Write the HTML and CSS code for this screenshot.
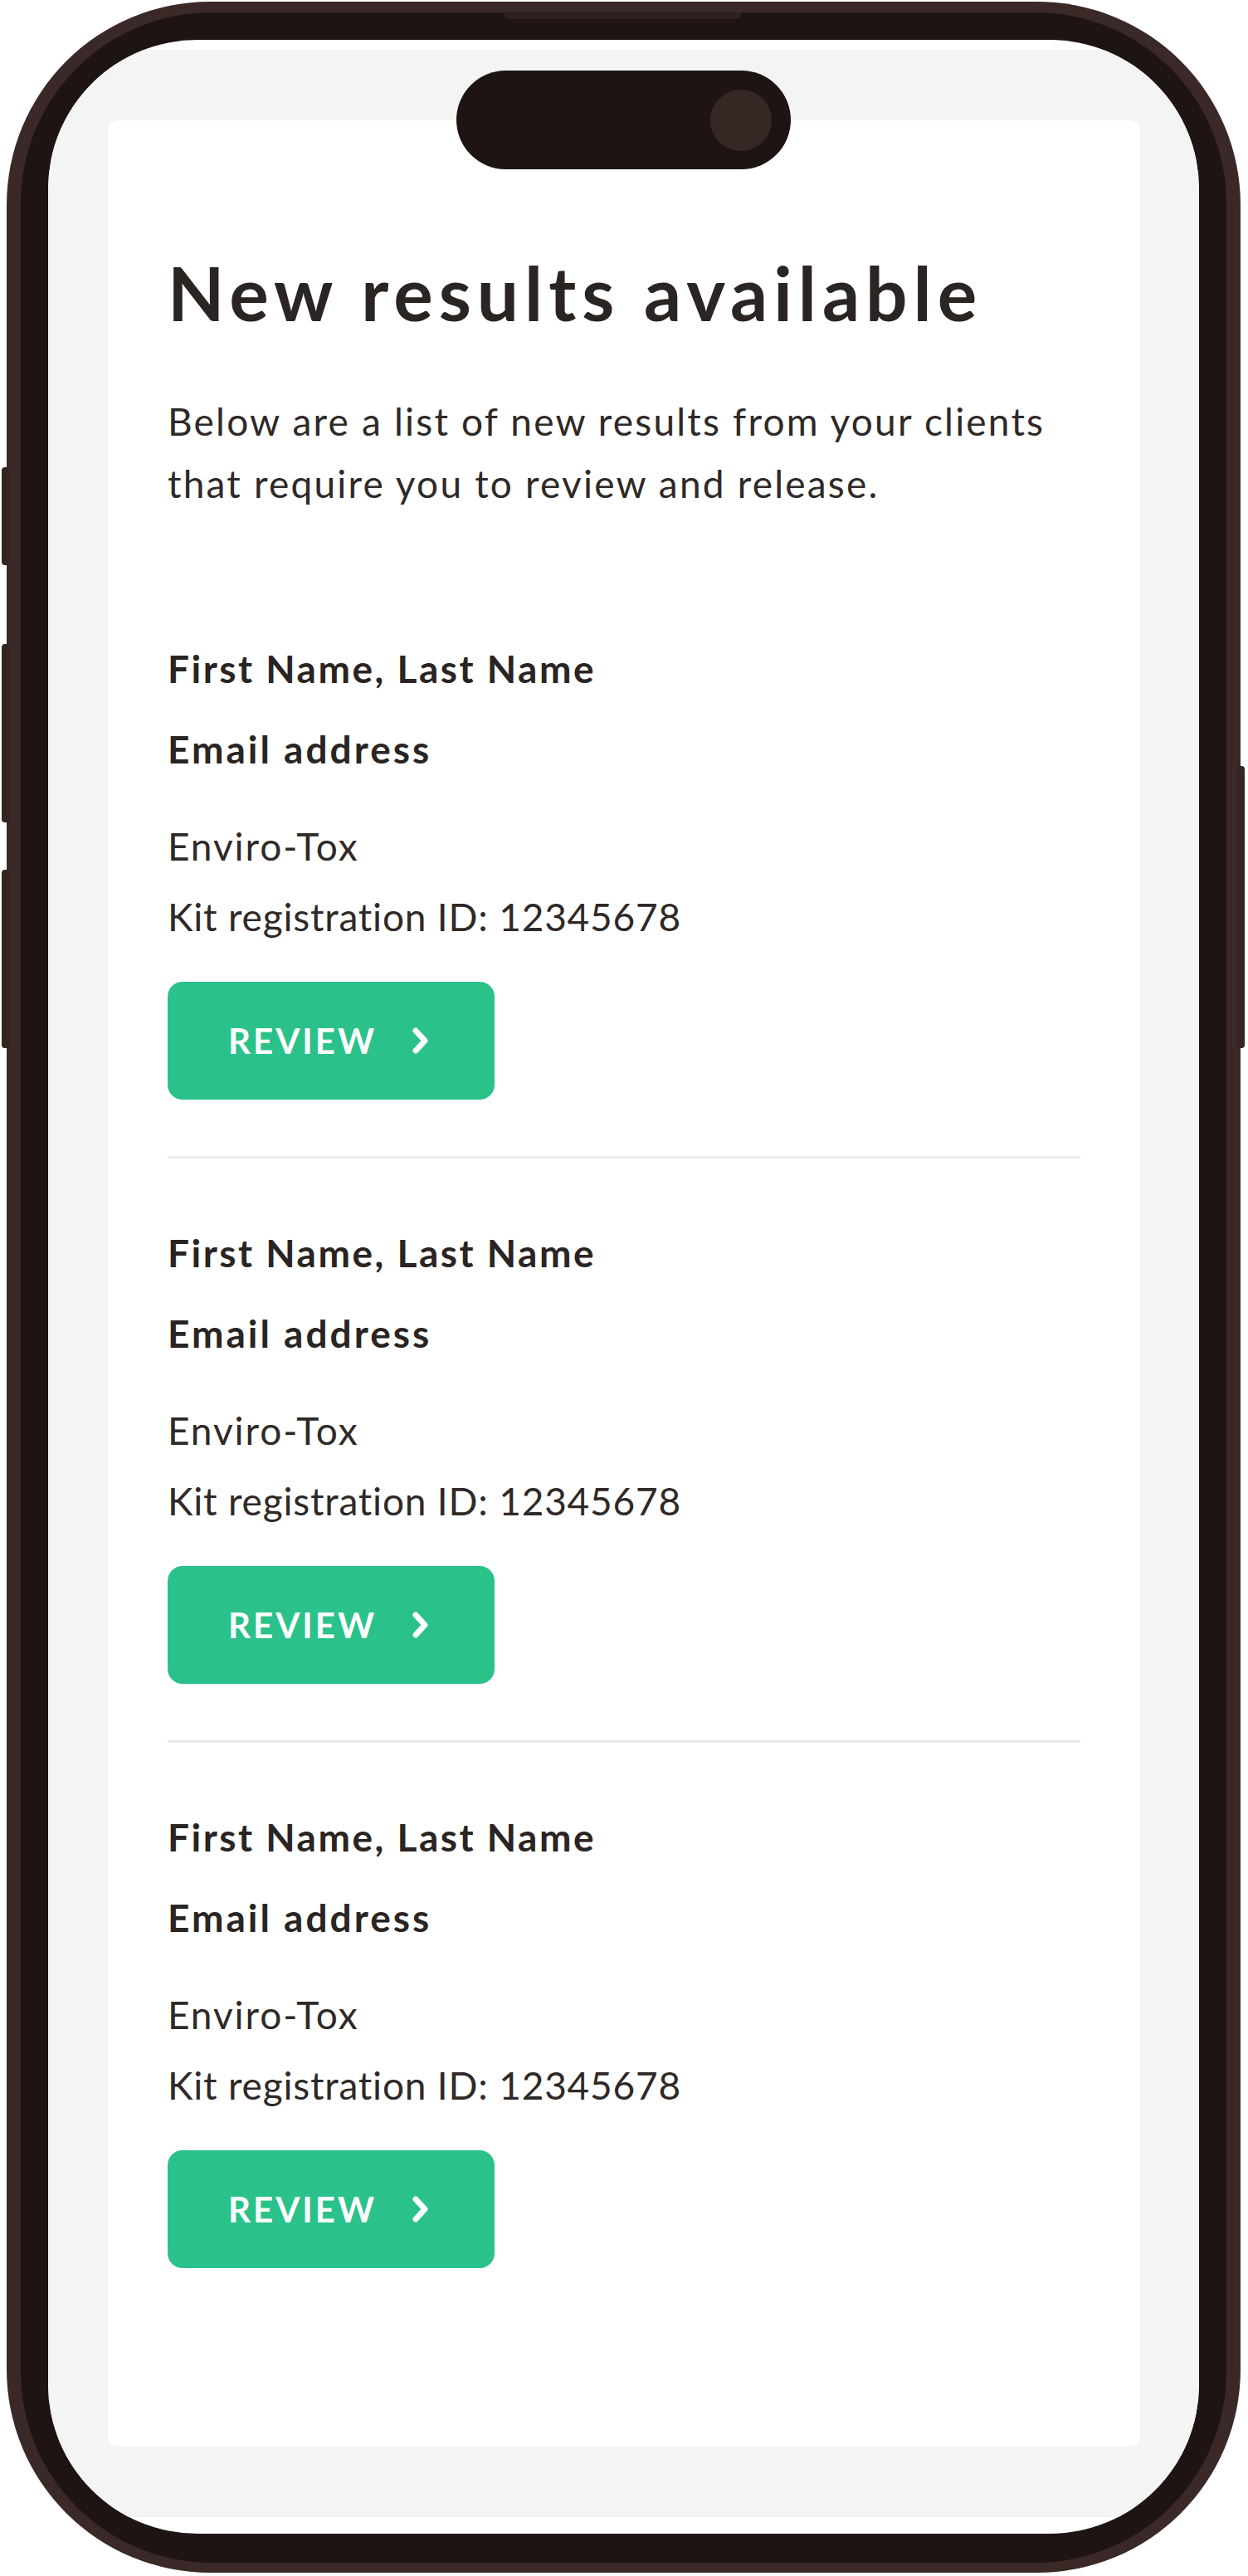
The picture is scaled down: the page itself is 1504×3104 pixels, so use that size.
FILE: index.html
```html
<!DOCTYPE html>
<html lang="en">
<head>
<meta charset="utf-8">
<title>New results available</title>
<link rel="stylesheet" href="styles.css">
</head>
<body>
<div class="phone">
  <span class="side-btn side-btn--l1"></span>
  <span class="side-btn side-btn--l2"></span>
  <span class="side-btn side-btn--l3"></span>
  <span class="side-btn side-btn--r1"></span>
  <div class="bezel">
    <span class="speaker"></span>
    <div class="screen">
      <div class="island"><span class="camera"></span></div>
      <div class="canvas">
        <main class="card">
          <h1 class="title">New results available</h1>
          <p class="intro">Below are a list of new results from your clients<br>that require you to review and release.</p>
          <div class="list">
            <section class="entry">
              <p class="entry-name">First Name, Last Name</p>
              <p class="entry-email">Email address</p>
              <p class="entry-test">Enviro-Tox</p>
              <p class="entry-kit">Kit registration ID: 12345678</p>
              <a class="btn" href="#"><span class="btn-label">REVIEW</span><svg class="chev" width="22" height="34" viewBox="0 0 22 34"><path d="M5 5 L16 17 L5 29" fill="none" stroke="#fff" stroke-width="7" stroke-linecap="round" stroke-linejoin="round"/></svg></a>
            </section>
            <section class="entry">
              <p class="entry-name">First Name, Last Name</p>
              <p class="entry-email">Email address</p>
              <p class="entry-test">Enviro-Tox</p>
              <p class="entry-kit">Kit registration ID: 12345678</p>
              <a class="btn" href="#"><span class="btn-label">REVIEW</span><svg class="chev" width="22" height="34" viewBox="0 0 22 34"><path d="M5 5 L16 17 L5 29" fill="none" stroke="#fff" stroke-width="7" stroke-linecap="round" stroke-linejoin="round"/></svg></a>
            </section>
            <section class="entry">
              <p class="entry-name">First Name, Last Name</p>
              <p class="entry-email">Email address</p>
              <p class="entry-test">Enviro-Tox</p>
              <p class="entry-kit">Kit registration ID: 12345678</p>
              <a class="btn" href="#"><span class="btn-label">REVIEW</span><svg class="chev" width="22" height="34" viewBox="0 0 22 34"><path d="M5 5 L16 17 L5 29" fill="none" stroke="#fff" stroke-width="7" stroke-linecap="round" stroke-linejoin="round"/></svg></a>
            </section>
          </div>
        </main>
      </div>
    </div>
  </div>
</div>
</body>
</html>
```
FILE: styles.css
```css
* { box-sizing: border-box; }
html, body { margin: 0; padding: 0; background: #ffffff; }
body { font-family: "Lato", "Liberation Sans", sans-serif; color: #2c2624; }

.phone {
  position: relative;
  margin: 2px 0 0 8px;
  width: 1487px;
  height: 3098px;
  padding: 13px 17px 12px 17px;
  background: #3a2926;
  border-radius: 245px;
}
.side-btn {
  position: absolute;
  width: 10px;
  background: #35241f;
  border-radius: 4px;
}
.side-btn--l1 { left: -6px; top: 561px; height: 118px; }
.side-btn--l2 { left: -6px; top: 774px; height: 215px; }
.side-btn--l3 { left: -6px; top: 1046px; height: 215px; }
.side-btn--r1 { right: -5px; top: 921px; height: 340px; }

.bezel {
  position: relative;
  height: 100%;
  padding: 33px 33px 35px 33px;
  background: #1e1513;
  border-radius: 230px;
}
.speaker {
  position: absolute;
  left: 583px;
  top: 0;
  width: 285px;
  height: 8px;
  background: #2e201e;
  border-radius: 0 0 6px 6px;
}
.screen {
  position: relative;
  height: 100%;
  display: flex;
  flex-direction: column;
  padding: 12px 0 20px;
  background: #ffffff;
  border-radius: 180px;
  overflow: hidden;
}
.island {
  position: absolute;
  left: 492px;
  top: 37px;
  width: 403px;
  height: 119px;
  background: #1e1513;
  border-radius: 60px;
}
.camera {
  position: absolute;
  left: 306px;
  top: 23px;
  width: 74px;
  height: 74px;
  border-radius: 50%;
  background: #362624;
}
.canvas {
  flex: 1;
  display: flex;
  flex-direction: column;
  padding: 85px 71px 85px 72px;
  background: #f4f4f4;
}
.card {
  flex: 1;
  padding: 158px 72px 0;
  background: #ffffff;
  border-radius: 12px;
}

.title {
  margin: 0 0 67px;
  font-size: 89px;
  line-height: 100px;
  font-weight: 700;
  letter-spacing: 7px;
  color: #2a2422;
}
.intro {
  margin: 0;
  font-size: 46px;
  line-height: 75px;
  font-weight: 400;
  letter-spacing: 2.2px;
  color: #2f2927;
}
.list { margin-top: 72px; }
.entry {
  padding: 84px 0 68px;
  border-bottom: 3px solid #ebebeb;
}
.entry:last-child { border-bottom: 0; }
.entry p { margin: 0; font-size: 46px; }
.entry-name, .entry-email {
  font-weight: 700;
  line-height: 60px;
  letter-spacing: 2.5px;
  color: #2a2422;
}
.entry-email { margin-top: 37px !important; letter-spacing: 3px; }
.entry-test, .entry-kit {
  line-height: 85px;
  color: #2f2927;
}
.entry-test { margin-top: 44px !important; letter-spacing: 1.9px; }
.entry-kit { letter-spacing: 0.8px; }

.btn {
  display: inline-flex;
  align-items: center;
  margin-top: 36px;
  height: 142px;
  padding: 0 78px 0 73px;
  background: #2ac28a;
  border-radius: 18px;
  text-decoration: none;
  color: #ffffff;
}
.btn-label {
  font-size: 42px;
  font-weight: 700;
  letter-spacing: 3px;
}
.chev { margin-left: 42px; display: block; }
```
